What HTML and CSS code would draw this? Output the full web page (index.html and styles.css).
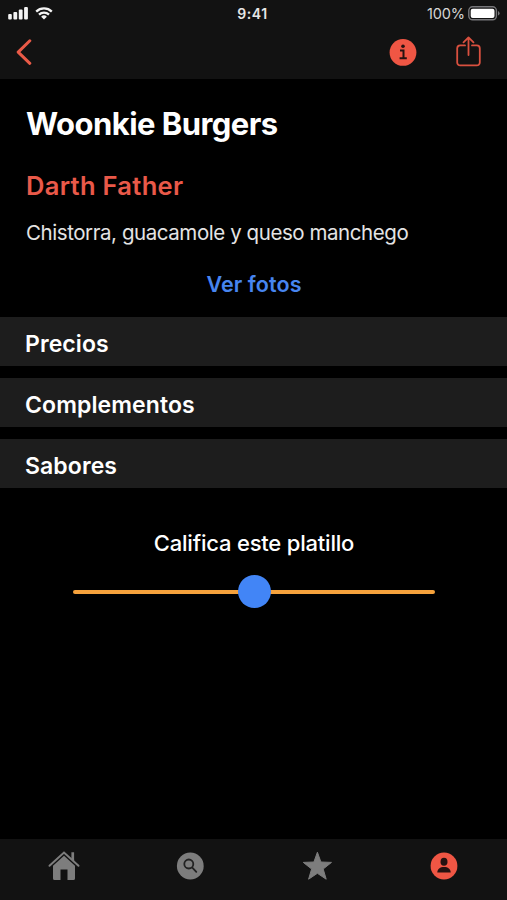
FILE: index.html
```html
<!DOCTYPE html>
<html lang="es">

<head>
  <meta charset="UTF-8">
  <meta name="viewport" content="width=device-width, initial-scale=1.0">
  <title>Woonkie Burgers</title>
  <link rel="stylesheet" href="styles.css">
</head>

<body>
  <div class="screen">
    <header class="header">
      <div class="status-bar">
        <div class="status-left">
          <svg class="signal" width="20" height="13" viewBox="0 0 20 13">
            <rect x="0.2" y="7" width="3.6" height="5.5" rx="1" />
            <rect x="5.4" y="5" width="3.8" height="7.5" rx="1" />
            <rect x="10.8" y="2.5" width="3.8" height="10" rx="1" />
            <rect x="16.1" y="0" width="3.8" height="12.5" rx="1" />
          </svg>
          <svg class="wifi" width="18" height="13" viewBox="0 0 18 13">
            <path d="M1.2 4.6a11.2 11.2 0 0 1 15.6 0M4 7.6a7.2 7.2 0 0 1 10 0" />
            <path class="dot" d="M9 12.5 6.1 9.7a4.1 4.1 0 0 1 5.8 0Z" />
          </svg>
        </div>
        <span class="time">9:41</span>
        <div class="status-right">
          <span class="percent">100%</span>
          <svg class="battery" width="32" height="15" viewBox="0 0 32 15">
            <rect class="shell" x="0.8" y="0.8" width="27.6" height="13" rx="3.8" />
            <rect class="charge" x="2.7" y="2.7" width="23.8" height="9.2" rx="2" />
            <path class="tip" d="M30 5v4.6q1.6-.7 1.6-2.3T30 5Z" />
          </svg>
        </div>
      </div>
      <nav class="nav-bar">
        <svg class="back" width="16" height="26" viewBox="0 0 16 26">
          <path d="M13.8 1.8 2.2 13.1l11.6 11.2" />
        </svg>
        <div class="actions">
          <svg class="info" width="28" height="28" viewBox="0 0 28 28">
            <circle cx="14" cy="14.4" r="13.4" />
            <path d="M11 12.5h3.5v7.2M10.6 20.3h7.2" />
            <circle class="mark" cx="14" cy="8.2" r="1.8" />
          </svg>
          <svg class="share" width="25" height="31" viewBox="0 0 25 31">
            <path d="M9 9.4H4.2a3 3 0 0 0-3 3v14a3 3 0 0 0 3 3h16.6a3 3 0 0 0 3-3v-14a3 3 0 0 0-3-3H16" />
            <path d="M12.5 19V1.6M7.5 6.3l5-4.9 5 4.9" />
          </svg>
        </div>
      </nav>
    </header>

    <main class="content">
      <div class="dish">
        <h1 class="title">Woonkie Burgers</h1>
        <h2 class="name">Darth Father</h2>
        <p class="description">Chistorra, guacamole y queso manchego</p>
        <a class="photos">Ver fotos</a>
      </div>

      <div class="sections">
        <div class="section">Precios</div>
        <div class="section">Complementos</div>
        <div class="section">Sabores</div>
      </div>

      <div class="rating">
        <div class="rating-label">Califica este platillo</div>
        <div class="slider">
          <div class="thumb"></div>
        </div>
      </div>
    </main>

    <footer class="tab-bar">
      <svg class="home" width="32" height="30" viewBox="0 0 32 30">
        <path class="roof" d="M1.5 14.8 16 1.5l14.5 13.3" />
        <path d="M23.4 1.2h2.7v9.2l-2.7-2.5Z" />
        <path d="M16 4.7 27 14.7V27.4a1.6 1.6 0 0 1-1.6 1.6H19.5V18.6h-7V29H6.6A1.6 1.6 0 0 1 5 27.4V14.7Z" />
      </svg>
      <svg width="28" height="28" viewBox="0 0 28 28">
        <circle cx="14.3" cy="14" r="13.4" />
        <circle class="lens" cx="12.8" cy="12" r="4.5" />
        <path class="lens" d="m16.3 15.7 4 4.2" />
      </svg>
      <svg width="32" height="30" viewBox="0 0 32 30">
        <path class="star" d="m16.4 1.2 3.5 9.8 10.6.4-8.3 6.6 3 10.2-8.8-5.9-8.8 5.9 3-10.2-8.3-6.6 10.6-.4Z" />
      </svg>
      <svg class="active" width="28" height="28" viewBox="0 0 28 28">
        <circle cx="14" cy="14" r="13.4" />
        <ellipse class="person" cx="14" cy="9.8" rx="3.5" ry="4" />
        <path class="person" d="M7.3 20.6c0-3.7 2.8-5.6 6.7-5.6s6.7 1.9 6.7 5.6Z" />
      </svg>
    </footer>
  </div>
</body>

</html>
```
FILE: styles.css
```css
* {
  box-sizing: border-box;
  margin: 0;
  padding: 0;
}

body {
  background-color: #000;
  color: #fff;
  font-family: Inter, "Liberation Sans", sans-serif;
}

svg {
  display: block;
}

.screen {
  display: flex;
  flex-direction: column;
  height: 900px;
  background-color: #000;
}

.header {
  height: 79px;
  background-color: #121212;
}

.status-bar {
  display: grid;
  grid-template-columns: 1fr auto 1fr;
  align-items: center;
  height: 27px;
  padding: 0 7px 0 8px;
}

.status-left {
  display: flex;
  gap: 7px;
}

.status-right {
  display: flex;
  align-items: center;
  justify-content: flex-end;
  gap: 3px;
}

.signal,
.wifi .dot {
  fill: #f4f4f4;
}

.wifi {
  fill: none;
  stroke: #f4f4f4;
  stroke-width: 2.3;
}

.wifi .dot {
  stroke: none;
}

.time {
  margin-right: 3px;
  font-size: 14px;
  font-weight: 600;
  letter-spacing: 0.6px;
  color: #e6e6e6;
}

.percent {
  font-size: 14.5px;
  letter-spacing: -0.1px;
  color: #d6d6d6;
}

.battery .shell {
  fill: none;
  stroke: #77777a;
  stroke-width: 1.4;
}

.battery .charge {
  fill: #fff;
}

.battery .tip {
  fill: #77777a;
}

.nav-bar {
  display: flex;
  align-items: center;
  justify-content: space-between;
  height: 50px;
  padding: 0 26px 0 16px;
}

.back {
  fill: none;
  stroke: #e95a47;
  stroke-width: 3;
  stroke-linecap: round;
  stroke-linejoin: round;
}

.actions {
  display: flex;
  align-items: center;
  gap: 39px;
}

.info {
  fill: #ef5644;
}

.info path {
  fill: none;
  stroke: #241211;
  stroke-width: 2;
}

.info .mark {
  fill: #241211;
}

.share {
  margin-bottom: 2px;
  fill: none;
  stroke: #d9503f;
  stroke-width: 1.8;
  stroke-linecap: round;
  stroke-linejoin: round;
}

.content {
  flex: 1;
}

.dish {
  display: flex;
  flex-direction: column;
  height: 238px;
  padding: 25px 25px 0 26px;
}

.title {
  line-height: 40px;
  font-size: 31px;
  font-weight: 700;
  letter-spacing: -0.55px;
}

.name {
  margin-top: 27px;
  line-height: 30px;
  font-size: 25.5px;
  font-weight: 600;
  letter-spacing: 0.3px;
  color: #e95949;
}

.description {
  margin-top: 19px;
  line-height: 26px;
  font-size: 20.5px;
  letter-spacing: -0.43px;
  color: #e4e4e4;
}

.photos {
  margin-top: 25px;
  line-height: 26px;
  font-size: 21.5px;
  font-weight: 600;
  letter-spacing: 0.1px;
  text-align: center;
  color: #4785f0;
}

.sections {
  display: flex;
  flex-direction: column;
  gap: 12px;
}

.section {
  height: 49px;
  padding: 5px 25px 0;
  line-height: 44px;
  font-size: 23px;
  font-weight: 600;
  letter-spacing: 0.1px;
  background-color: #1d1d1d;
}

.rating {
  padding: 40px 72px 0 73px;
}

.rating-label {
  line-height: 30px;
  font-size: 22px;
  font-weight: 500;
  letter-spacing: -0.2px;
  text-align: center;
}

.slider {
  display: flex;
  align-items: center;
  justify-content: center;
  height: 4px;
  margin-top: 32px;
  border-radius: 2px;
  background-color: #f6a23c;
}

.thumb {
  flex: none;
  width: 33px;
  height: 33px;
  margin-bottom: 1px;
  border-radius: 50%;
  background-color: #4285f6;
}

.tab-bar {
  display: grid;
  grid-template-columns: repeat(4, 1fr);
  align-items: center;
  justify-items: center;
  height: 61px;
  padding-bottom: 8px;
  background-color: #121212;
}

.tab-bar svg {
  fill: #7d7d7d;
}

.tab-bar .home {
  margin-left: 2px;
}

.tab-bar .roof {
  fill: none;
  stroke: #7d7d7d;
  stroke-width: 2;
  stroke-linecap: round;
}

.tab-bar .lens {
  fill: none;
  stroke: #222;
  stroke-width: 1.8;
  stroke-linecap: round;
}

.tab-bar .star {
  stroke: #7d7d7d;
  stroke-linejoin: round;
}

.tab-bar .active {
  fill: #ef5644;
}

.tab-bar .person {
  fill: #241211;
}
```
